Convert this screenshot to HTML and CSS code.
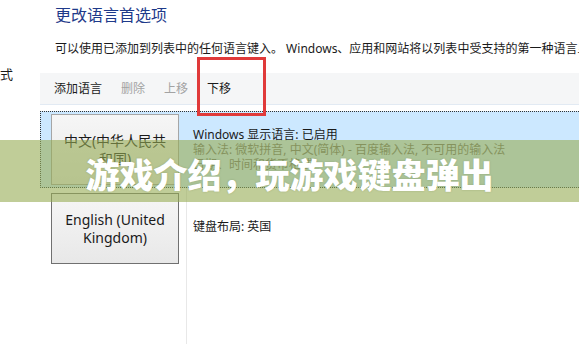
FILE: index.html
```html
<!DOCTYPE html>
<html lang="zh-CN">
<head>
<meta charset="UTF-8">
<meta name="viewport" content="width=device-width, initial-scale=1.0">
<title>更改语言首选项</title>
<link rel="stylesheet" href="styles.css">
</head>
<body>
<div id="page">
    <div id="side">式</div>
    <div id="main">
        <div id="header">
            <h1>更改语言首选项</h1>
            <p>可以使用已添加到列表中的任何语言键入。 Windows、应用和网站将以列表中受支持的第一种语言显示。</p>
        </div>
        <!-- 工具栏 -->
        <div id="toolbar">
            <span class="tool">添加语言</span>
            <span class="tool disabled">删除</span>
            <span class="tool disabled">上移</span>
            <span class="tool marked">下移</span>
        </div>
        <!-- 语言列表 -->
        <div id="list">
            <div class="row selected">
                <div class="lang"><div class="lang-btn">中文(中华人民共和国)</div></div>
                <div class="info">
                    <div>Windows 显示语言: 已启用</div>
                    <div class="sub">输入法: 微软拼音, 中文(简体) - 百度输入法, 不可用的输入法</div>
                    <div class="sub">日期、时间和货币格式</div>
                </div>
            </div>
            <div class="row">
                <div class="lang"><div class="lang-btn dark">English (United Kingdom)</div></div>
                <div class="info">
                    <div>键盘布局: 英国</div>
                </div>
            </div>
            <div class="row filler">
                <div class="lang"></div>
                <div class="info"></div>
            </div>
        </div>
    </div>
</div>
<div id="banner">游戏介绍，玩游戏键盘弹出</div>
</body>
</html>
```

FILE: styles.css
```css
body {
    margin: 0;
    width: 579px;
    height: 344px;
    overflow: hidden;
    position: relative;
    background: #fff;
    color: #1a1a1a;
    font-family: "Noto Sans", "Noto Sans CJK SC", sans-serif;
    font-size: 12px;
}

#page {
    display: grid;
    grid-template-columns: 40px 1fr;
    height: 344px;
}

#side {
    padding-top: 66px;
    font-size: 13px;
    line-height: 16px;
}

#main {
    display: flex;
    flex-direction: column;
    min-width: 0;
}

#header {
    padding-left: 15px;
    white-space: nowrap;
    overflow: hidden;
}

#header h1 {
    margin: 0;
    padding-top: 4px;
    font-size: 16px;
    line-height: 22px;
    font-weight: normal;
    color: #1e3a8a;
}

#header p {
    margin: 14px 0 0;
    line-height: 18px;
}

#toolbar {
    margin-top: 15px;
    height: 31px;
    display: flex;
    align-items: center;
    gap: 19px;
    padding-left: 14px;
    background: #f5f6f7;
    border-bottom: 1px solid #e2eaf3;
}

.tool {
    line-height: 16px;
}

.tool.disabled {
    color: #a3a3a3;
}

.tool.marked {
    position: relative;
}

/* 红框标注 */
.tool.marked::after {
    content: "";
    position: absolute;
    left: -10px;
    top: -24px;
    width: 63px;
    height: 53px;
    border: 3px solid #e03a3a;
}

#list {
    flex: 1;
    display: flex;
    flex-direction: column;
    margin-top: 6px;
}

.row {
    display: grid;
    grid-template-columns: 147px 1fr;
    align-items: center;
}

.row .lang {
    box-sizing: border-box;
    align-self: stretch;
    padding: 5px 0 0 11px;
    border-right: 1px solid #e8e8e8;
}

.row.selected {
    grid-template-columns: 146px 1fr;
    background: #cce8ff;
    border: 1px dotted #333;
    border-right: none;
}

.row.selected .lang {
    padding: 2px 0 2px 10px;
    border-right: none;
}

.row.filler {
    flex: 1;
}

.lang-btn {
    box-sizing: border-box;
    width: 128px;
    height: 71px;
    display: flex;
    align-items: center;
    justify-content: center;
    padding: 0 10px;
    text-align: center;
    font-size: 14px;
    line-height: 18px;
    border: 1px solid #a6a6a6;
    background: linear-gradient(#f6f6f6, #e8e8e8);
}

.lang-btn.dark {
    border-color: #707070;
}

.info {
    padding-left: 6px;
    line-height: 15px;
    white-space: nowrap;
    overflow: hidden;
}

.info .sub {
    color: #6d6d6d;
}

#banner {
    position: absolute;
    left: 0;
    right: 0;
    top: 140px;
    height: 62px;
    box-sizing: border-box;
    padding-top: 4px;
    display: flex;
    align-items: center;
    justify-content: center;
    background: rgba(150, 172, 84, 0.6);
    color: #fff;
    font-family: "Noto Sans CJK SC", sans-serif;
    font-size: 34px;
    font-weight: 900;
    text-shadow: 0 0 2px rgba(60, 80, 30, 0.25);
}
```
